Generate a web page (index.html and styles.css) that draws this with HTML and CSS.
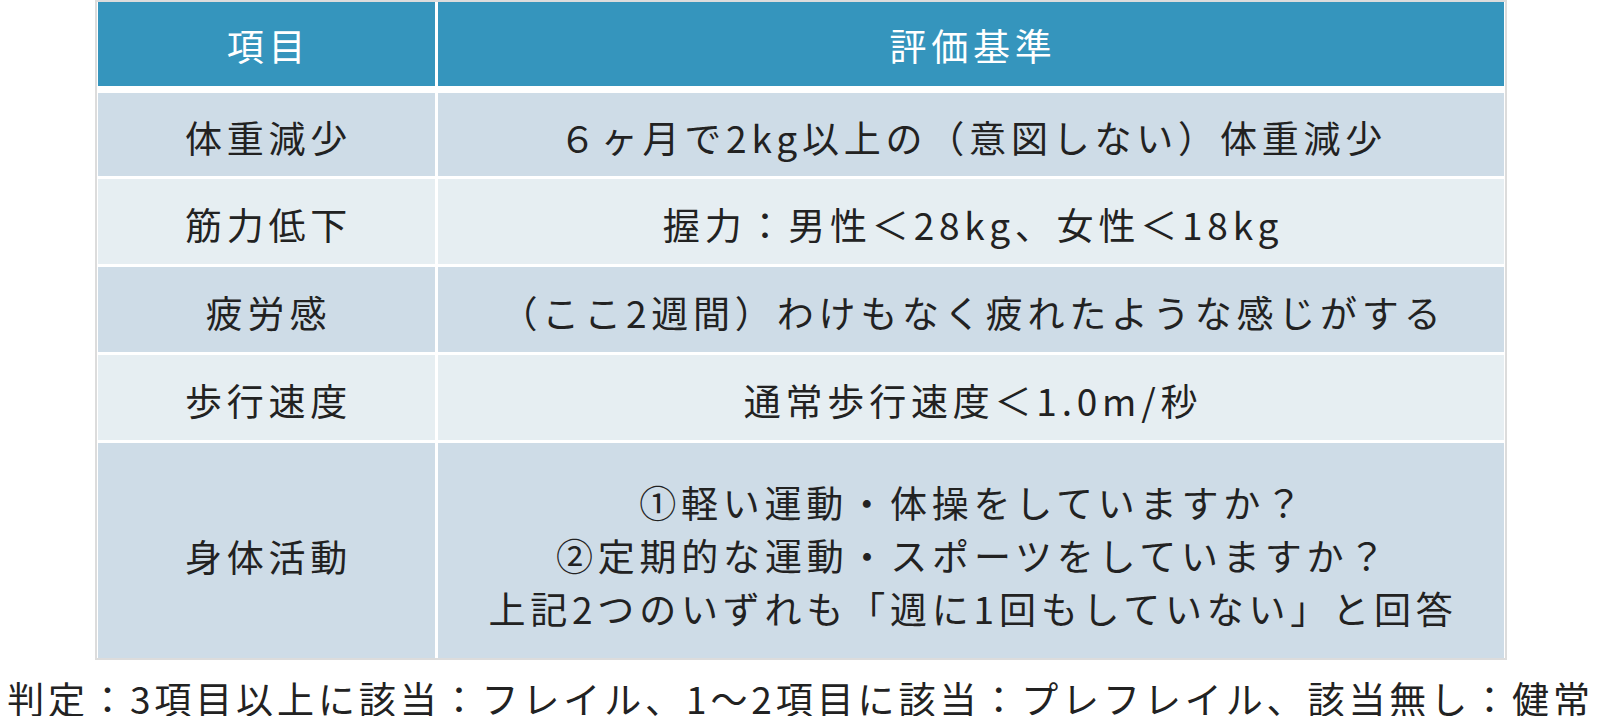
FILE: index.html
```html
<!DOCTYPE html>
<html lang="ja">
<head>
<meta charset="utf-8">
<title>フレイル評価基準</title>
<link rel="stylesheet" href="styles.css">
</head>
<body>
<div class="page">
  <div class="table">
    <div class="row head">
      <div class="cell c1">項目</div>
      <div class="cell c2">評価基準</div>
    </div>
    <div class="row dark r1">
      <div class="cell c1">体重減少</div>
      <div class="cell c2">６ヶ月で2kg以上の（意図しない）体重減少</div>
    </div>
    <div class="row light">
      <div class="cell c1">筋力低下</div>
      <div class="cell c2">握力：男性＜28kg、女性＜18kg</div>
    </div>
    <div class="row dark">
      <div class="cell c1">疲労感</div>
      <div class="cell c2">（ここ2週間）わけもなく疲れたような感じがする</div>
    </div>
    <div class="row light">
      <div class="cell c1">歩行速度</div>
      <div class="cell c2">通常歩行速度＜1.0m/秒</div>
    </div>
    <div class="row dark tall">
      <div class="cell c1">身体活動</div>
      <div class="cell c2 multi">
        <div>①軽い運動・体操をしていますか？</div>
        <div>②定期的な運動・スポーツをしていますか？</div>
        <div>上記2つのいずれも「週に1回もしていない」と回答</div>
      </div>
    </div>
  </div>
  <p class="note">判定：3項目以上に該当：フレイル、1～2項目に該当：プレフレイル、該当無し：健常</p>
</div>
</body>
</html>
```

FILE: styles.css
```css
html, body {
  margin: 0;
  padding: 0;
  background: #ffffff;
}

body {
  font-family: "Noto Sans CJK JP", "Noto Sans", sans-serif;
  color: #222222;
}

.page {
  width: 1601px;
}

.table {
  width: 1406px;
  margin: 0 auto;
  border: 2px solid #dcdcdc;
  padding: 0 1px;
  display: flex;
  flex-direction: column;
  gap: 3px;
  background: #ffffff;
}

.row {
  display: grid;
  grid-template-columns: 337px 1066px;
  column-gap: 3px;
  height: 85px;
}

.row.head {
  height: 84px;
  margin-bottom: 4px;
}

.row.r1 {
  height: 83px;
}

.row.tall {
  height: 215px;
}

.cell {
  display: flex;
  align-items: center;
  justify-content: center;
  font-size: 37px;
  letter-spacing: 4.8px;
  line-height: 1;
  padding-top: 6px;
  padding-left: 5px;
  box-sizing: border-box;
  white-space: nowrap;
}

.head .cell {
  background: #3595bd;
  color: #ffffff;
  padding-top: 2px;
}

.dark .cell {
  background: #cedce7;
}

.light .cell {
  background: #e6eef2;
}

.multi {
  flex-direction: column;
  line-height: 53px;
  padding-top: 10px;
}

.tall .c1 {
  padding-top: 12px;
}

.note {
  margin: 20px 0 0;
  text-align: center;
  font-size: 37px;
  letter-spacing: 3.9px;
  line-height: 36px;
  white-space: nowrap;
}
```
